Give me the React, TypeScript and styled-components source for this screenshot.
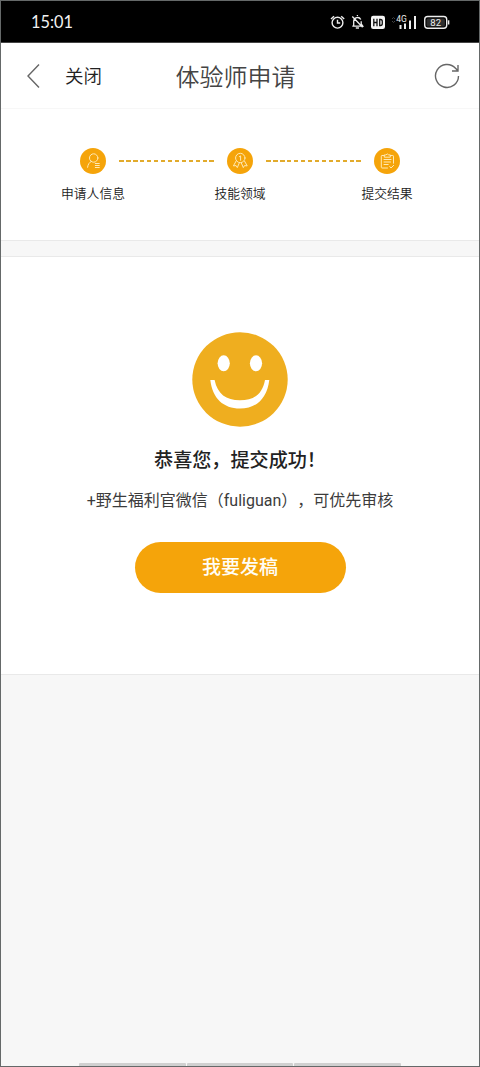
import React from 'react';
import styled, { createGlobalStyle } from 'styled-components';

const GlobalStyle = createGlobalStyle`
  * { box-sizing: border-box; }
  body {
    margin: 0;
    background: #f7f7f7;
    font-family: Roboto, 'Noto Sans CJK SC', sans-serif;
    text-spacing-trim: space-all;
  }
`;

const Screen = styled.div`
  width: 480px;
  height: 1067px;
  display: flex;
  flex-direction: column;
  border: 1px solid #656969;
  background: #f7f7f7;
  overflow: hidden;
`;

const StatusBar = styled.div`
  flex: none;
  height: 42px;
  padding: 0 27px 0 30px;
  display: flex;
  align-items: center;
  justify-content: space-between;
  background: #000;
  border-bottom: 1px solid #444;
`;

const Clock = styled.span`
  font: 400 16.3px/20px Lato, sans-serif;
  color: #f2f2f2;
`;

const StatusIcons = styled.svg`
  display: block;
  width: 124px;
  height: 20px;
`;

const NavBar = styled.header`
  flex: none;
  height: 66px;
  display: grid;
  grid-template-columns: 140px 1fr 140px;
  align-items: center;
  background: #fff;
  border-bottom: 1px solid #f7f7f7;
`;

const NavStart = styled.div`
  display: flex;
  align-items: center;
  padding-left: 25px;
  gap: 24px;
`;

const NavEnd = styled.div`
  display: flex;
  justify-content: flex-end;
  padding-right: 19px;
`;

const NavIcon = styled.svg<{ $w: number; $h: number }>`
  display: block;
  width: ${(p) => p.$w}px;
  height: ${(p) => p.$h}px;
  fill: none;
  stroke: #666;
  stroke-width: 1.4;
`;

const CloseLabel = styled.span`
  padding-top: 3px;
  font-size: 18.5px;
  line-height: 24px;
  font-weight: 350;
  color: #222;
`;

const Title = styled.h1`
  margin: 0 -18px 0 -27px;
  padding-top: 4px;
  font-size: 24px;
  line-height: 32px;
  font-weight: 350;
  text-align: center;
  color: #444;
`;

const Steps = styled.section`
  flex: none;
  height: 132px;
  padding: 39px 52px 0;
  display: flex;
  align-items: flex-start;
  background: #fff;
  border-bottom: 1px solid #e9e9e9;
`;

const Step = styled.div`
  flex: none;
  width: 80px;
  display: flex;
  flex-direction: column;
  align-items: center;
  gap: 10px;
`;

const StepIcon = styled.svg`
  display: block;
  width: 26px;
  height: 26px;
  fill: none;
  stroke: #ffe9b5;
  stroke-width: 1;
  stroke-linecap: round;
  stroke-linejoin: round;
`;

const StepLabel = styled.span`
  font-size: 12.8px;
  line-height: 20px;
  font-weight: 350;
  white-space: nowrap;
  color: #222;
`;

const Dashes = styled.div`
  flex: 1;
  height: 1.5px;
  margin: 12.3px -14px 0;
  background: repeating-linear-gradient(90deg, #e2ab2c 0 4.6px, transparent 4.6px 6.96px);
`;

const Result = styled.main`
  flex: none;
  height: 419px;
  margin-top: 15px;
  padding-top: 75px;
  display: flex;
  flex-direction: column;
  align-items: center;
  background: #fff;
  border: solid #e9e9e9;
  border-width: 1px 0;
`;

const Smiley = styled.svg`
  display: block;
  width: 96px;
  height: 95px;
`;

const Heading = styled.h2`
  margin: 19px 0 0;
  font-size: 19.1px;
  line-height: 30px;
  font-weight: 500;
  color: #222;
`;

const Note = styled.p`
  margin: 13px 0 0;
  font-size: 16px;
  line-height: 24px;
  white-space: nowrap;
  color: #3c3c3c;
`;

const SubmitButton = styled.button`
  width: 211px;
  height: 51px;
  margin-top: 29px;
  padding: 0;
  border: 0;
  border-radius: 26px;
  background: #f5a40a;
  font: 500 19px/28px Roboto, 'Noto Sans CJK SC', sans-serif;
  color: #fffdf5;
`;

const BottomKeys = styled.div`
  display: flex;
  justify-content: center;
  gap: 1px;
  margin-top: auto;
`;

const Key = styled.div`
  width: 106.5px;
  height: 3px;
  background: #d0d0d0;
  border-radius: 1px 1px 0 0;
`;

function StatusGlyphs() {
  return (
    <StatusIcons viewBox="328 11 124 20" fill="none" stroke="#eee" strokeWidth="1.4">
      <circle cx="337.5" cy="21.7" r="5.4" />
      <path d="M337.5 18.700v3.300h2.700M331 18l3-2.800M344.200 18l-3-2.800" />
      <path d="M353.700 24.500V20a3.800 3.800 0 0 1 7.100-1.500M361.200 20.200v2.600l1.600 2.300h-10.500M357.400 15v-1M352.300 15.500l10.300 10.700" strokeWidth="1.300" />
      <path d="M355.800 27h3.200" />
      <rect x="371" y="14.7" width="14" height="13.3" rx="2.2" fill="#f5f5f5" stroke="none" />
      <path d="M373.800 17.800v7.400M377 17.800v7.400M373.800 21.500h3.200M379.700 18.500v6h.8q1.800 0 1.800-2v-2q0-2-1.800-2z" stroke="#111" strokeWidth="1.3" />
      <path d="M392 18l1.500-1.500L395 18M392 20l1.500 1.500L395 20" stroke="#444" strokeWidth="1" />
      <text x="396.3" y="20.8" fill="#eee" stroke="none" fontFamily="Roboto, sans-serif" fontSize="8.5">4G</text>
      <path d="M400.500 24v4M405 22.500V28M410 19.500V28M415 15v13" strokeWidth="2" />
      <rect x="424.7" y="15.5" width="22" height="11.800" rx="3" strokeWidth="1.4" />
      <rect x="426.5" y="17.5" width="18.4" height="8" rx="1.5" fill="#2d2d2d" stroke="none" />
      <path d="M448.600 19.300v4.200" strokeWidth="1.5" />
      <text x="430.3" y="25" fill="#eee" stroke="none" fontFamily="Roboto, sans-serif" fontSize="9.5">82</text>
    </StatusIcons>
  );
}

function PersonIcon() {
  return (
    <StepIcon viewBox="0 0 26 26">
      <circle cx="13" cy="13" r="13" fill="#f5a40a" stroke="none" />
      <circle cx="13.7" cy="10" r="4.2" />
      <path d="M11.300 13.400C9 14.500 8 16.500 7.600 19.300M15.300 15.500h4M15.300 17.500h4M15.300 19.500h4" />
    </StepIcon>
  );
}

function MedalIcon() {
  return (
    <StepIcon viewBox="0 0 26 26">
      <circle cx="13" cy="13" r="13" fill="#f5a40a" stroke="none" />
      <circle cx="13.3" cy="10" r="4.7" />
      <path d="M12.400 8.700l1.200-.8v4.400M9 13.300l-2.600 4.600 2.700-.3 1.200 2 2.100-4.900M17.600 13.300l2.600 4.600-2.700-.3-1.200 2-2.100-4.900" />
    </StepIcon>
  );
}

function ClipboardIcon() {
  return (
    <StepIcon viewBox="0 0 26 26">
      <circle cx="13" cy="13" r="13" fill="#f5a40a" stroke="none" />
      <path d="M13.500 20H8q-.7 0-.7-.7V8.200q0-.7.7-.7h2.200M16.300 7.500h2.500q.7 0 .7.7v7M10.300 8.800V6.900h1.600q1.400-1.900 2.800 0h1.600v1.900zM10 11.500h7M10 14h6.500M10 16.500h4.200M15.700 18.500l1.300 1.500 2.700-2.700" />
    </StepIcon>
  );
}

export default function App() {
  return (
    <>
      <GlobalStyle />
      <Screen>
        <StatusBar>
          <Clock>15:01</Clock>
          <StatusGlyphs />
        </StatusBar>
        <NavBar>
          <NavStart>
            <NavIcon $w={15} $h={26} viewBox="0 0 15 26"><path d="M13 1.500L2 13l11 11.500" /></NavIcon>
            <CloseLabel>关闭</CloseLabel>
          </NavStart>
          <Title>体验师申请</Title>
          <NavEnd>
            <NavIcon $w={26} $h={26} viewBox="0 0 26 26">
              <path d="M24.500 13A11.500 11.500 0 1 1 21.500 5.200L24 7.800M24 2v6h-6" />
            </NavIcon>
          </NavEnd>
        </NavBar>
        <Steps>
          <Step><PersonIcon /><StepLabel>申请人信息</StepLabel></Step>
          <Dashes />
          <Step><MedalIcon /><StepLabel>技能领域</StepLabel></Step>
          <Dashes />
          <Step><ClipboardIcon /><StepLabel>提交结果</StepLabel></Step>
        </Steps>
        <Result>
          <Smiley viewBox="0 0 96 95">
            <ellipse cx="48" cy="47.5" rx="47.7" ry="47.2" fill="#efae1f" />
            <ellipse cx="31.7" cy="31.3" rx="6.1" ry="8" fill="#fff" />
            <ellipse cx="64" cy="31.3" rx="6.1" ry="8" fill="#fff" />
            <path d="M18.300 48h4.300C25.500 62 34 68.300 48 68.300S70.500 62 73 48h4.300C75 66.500 64.500 76.500 48 76.500S20.500 66.500 18.300 48z" fill="#fff" />
          </Smiley>
          <Heading>恭喜您，提交成功！</Heading>
          <Note>+野生福利官微信（fuliguan），可优先审核</Note>
          <SubmitButton>我要发稿</SubmitButton>
        </Result>
        <BottomKeys><Key /><Key /><Key /></BottomKeys>
      </Screen>
    </>
  );
}
